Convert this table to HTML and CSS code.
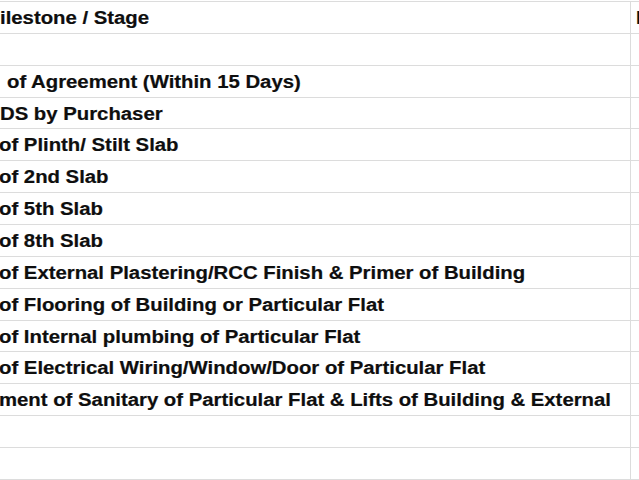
FILE: index.html
```html
<!DOCTYPE html>
<html>
<head>
<meta charset="utf-8">
<link rel="stylesheet" href="styles.css">
</head>
<body>
<div class="sheet">
  <div class="row"><div class="cell main"><span class="txt">ilestone / Stage</span></div><div class="cell side"><span class="txt">P</span></div></div>
  <div class="row"><div class="cell main"></div><div class="cell side"></div></div>
  <div class="row"><div class="cell main indent"><span class="txt">of Agreement (Within 15 Days)</span></div><div class="cell side"></div></div>
  <div class="row"><div class="cell main"><span class="txt">DS by Purchaser</span></div><div class="cell side"></div></div>
  <div class="row"><div class="cell main cut"><span class="txt">of Plinth/ Stilt Slab</span></div><div class="cell side"></div></div>
  <div class="row"><div class="cell main cut"><span class="txt">of 2nd Slab</span></div><div class="cell side"></div></div>
  <div class="row"><div class="cell main cut"><span class="txt">of 5th Slab</span></div><div class="cell side"></div></div>
  <div class="row"><div class="cell main cut"><span class="txt">of 8th Slab</span></div><div class="cell side"></div></div>
  <div class="row"><div class="cell main cut"><span class="txt">of External Plastering/RCC Finish &amp; Primer of Building</span></div><div class="cell side"></div></div>
  <div class="row"><div class="cell main cut"><span class="txt">of Flooring of Building or Particular Flat</span></div><div class="cell side"></div></div>
  <div class="row"><div class="cell main cut"><span class="txt">of Internal plumbing of Particular Flat</span></div><div class="cell side"></div></div>
  <div class="row"><div class="cell main cut"><span class="txt">of Electrical Wiring/Window/Door of Particular Flat</span></div><div class="cell side"></div></div>
  <div class="row"><div class="cell main cut"><span class="txt">ment of Sanitary of Particular Flat &amp; Lifts of Building &amp; External</span></div><div class="cell side"></div></div>
  <div class="row"><div class="cell main"></div><div class="cell side"></div></div>
  <div class="row"><div class="cell main"></div><div class="cell side"></div></div>
</div>
</body>
</html>
```
FILE: styles.css
```css
html, body {
  margin: 0;
  padding: 0;
  background: #ffffff;
  overflow: hidden;
  width: 639px;
  height: 480px;
}
.sheet {
  margin-top: 1px;
  border-top: 1px solid #dcdcdc;
  display: flex;
  flex-direction: column;
  width: 700px;
}
.row {
  display: grid;
  grid-template-columns: 631px 1fr;
  height: 31.87px;
  box-sizing: border-box;
  border-bottom: 1px solid #dcdcdc;
}
.cell {
  overflow: hidden;
  white-space: nowrap;
  font-family: "Liberation Sans", Arial, sans-serif;
  font-weight: bold;
  font-size: 17.6px;
  line-height: 30px;
  padding-top: 1px;
  color: #0e0e0e;
}
.main {
  border-right: 1px solid #dcdcdc;
}
.side {
  padding-left: 5px;
}
.indent {
  padding-left: 7px;
}
.cut {
  margin-left: -1px;
}
.txt {
  display: inline-block;
  transform: scaleX(1.155);
  transform-origin: left center;
  -webkit-text-stroke: 0.2px #0e0e0e;
}
```
